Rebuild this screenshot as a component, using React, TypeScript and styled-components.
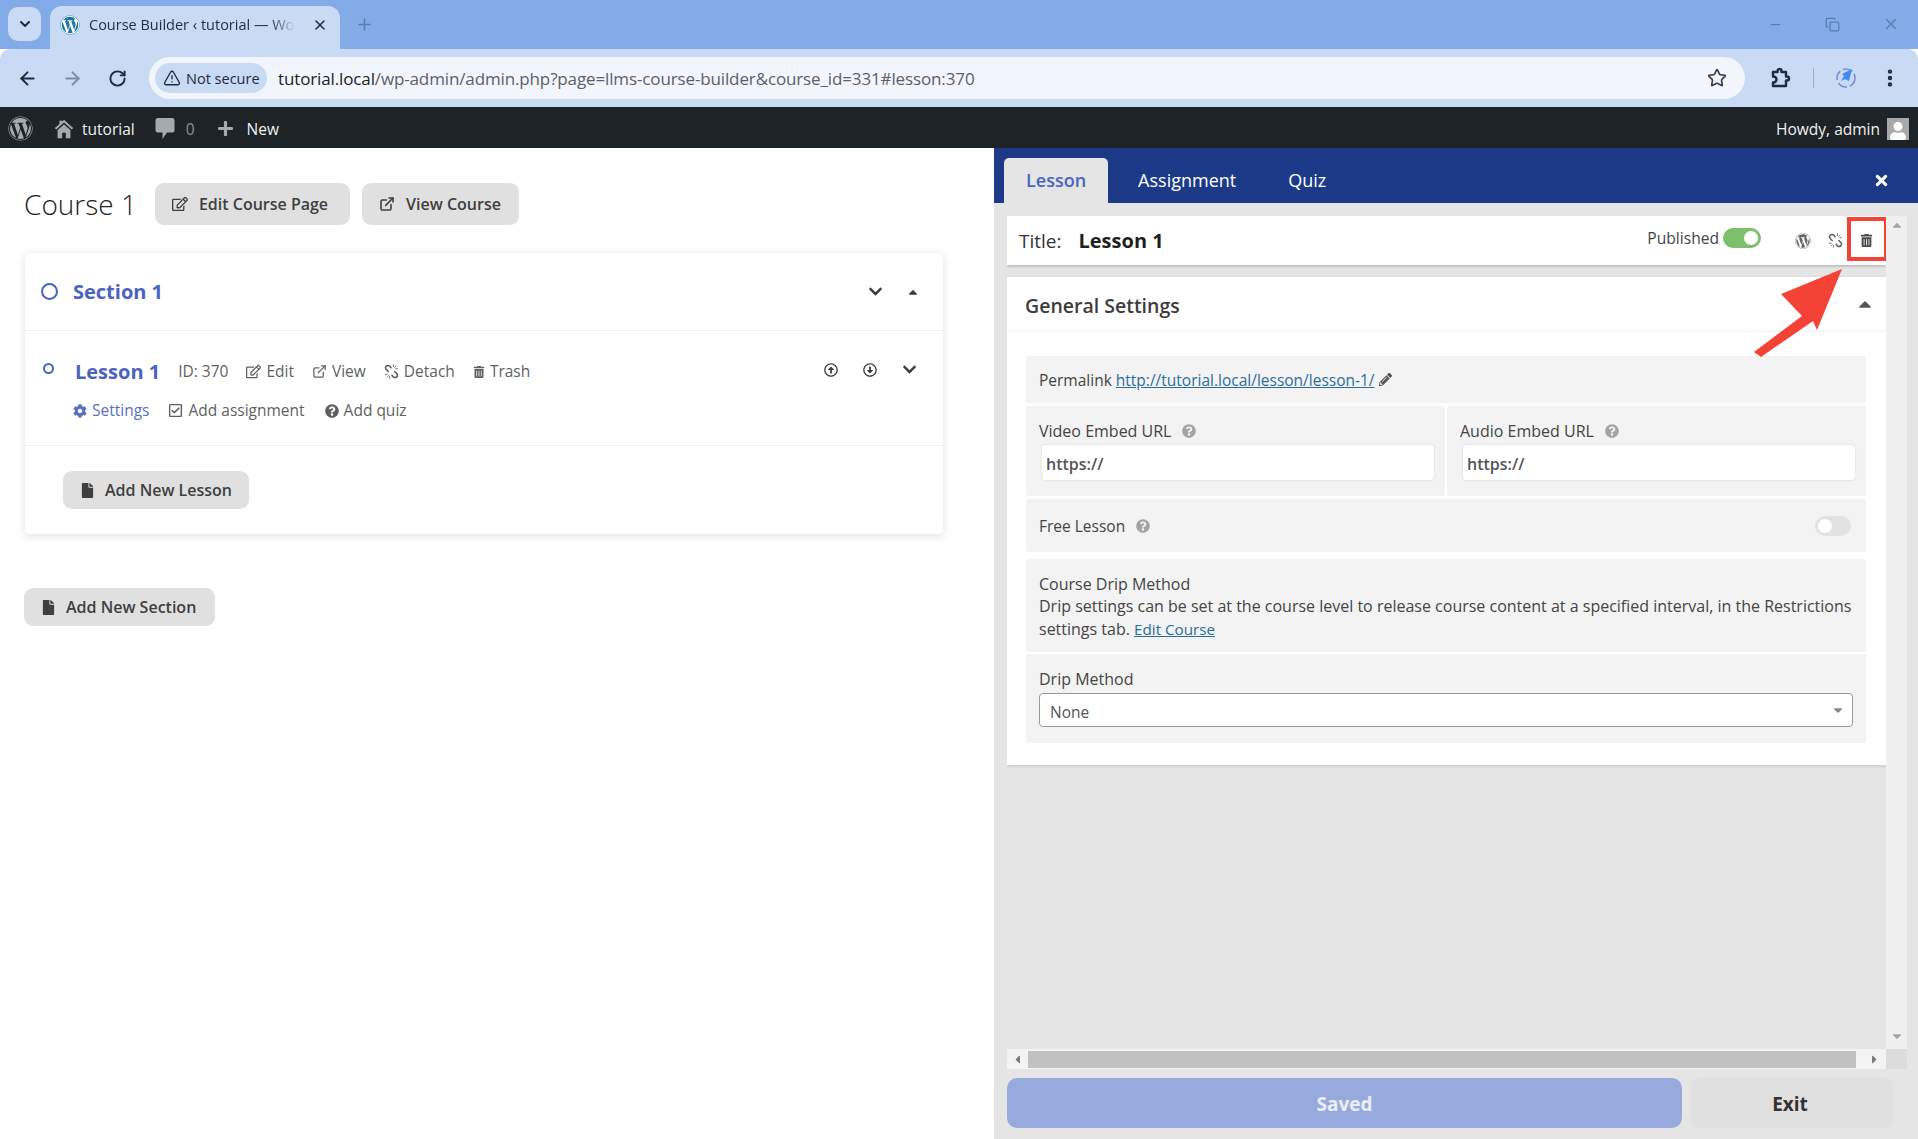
import React from 'react';
import styled, { createGlobalStyle } from 'styled-components';
import {
  FaWordpress, FaPlus, FaRegEdit, FaCog, FaRegCheckSquare, FaQuestionCircle, FaFile, FaChevronDown,
  FaCaretUp, FaTimes, FaPencilAlt, FaRegArrowAltCircleUp, FaRegArrowAltCircleDown, FaUser, FaTrashAlt,
  FaCaretDown, FaCaretLeft, FaCaretRight,
} from 'react-icons/fa';
import { FiExternalLink } from 'react-icons/fi';
import { ArrowLeft, ArrowRight, RotateCw, TriangleAlert, Star, EllipsisVertical, ChevronDown, X, Plus, Minus, Copy } from 'lucide-react';

const Global = createGlobalStyle`
  html, body { margin: 0; padding: 0; }
  body { font-family: "Open Sans", "Noto Sans", sans-serif; color: #444; background: #fff; }
  * { box-sizing: border-box; }
`;

const Page = styled.div`
  position: relative;
  width: 1918px;
  height: 1139px;
  display: flex;
  flex-direction: column;
  overflow: hidden;
`;

/* browser chrome */
const TabStrip = styled.div`
  height: 49px;
  background: #83abe8;
  display: flex;
  align-items: flex-end;
  padding-left: 8px;
  color: #44546f;
`;

const TabMenu = styled.div`
  width: 33px;
  height: 34px;
  margin-bottom: 8px;
  border-radius: 10px;
  background: #c9daf5;
  color: #1f2a3d;
  display: flex;
  align-items: center;
  justify-content: center;
`;

const BrowserTab = styled.div`
  width: 290px;
  height: 43px;
  margin-left: 9px;
  padding: 0 12px 6px 10px;
  background: #c9daf5;
  border-radius: 12px 12px 0 0;
  display: flex;
  align-items: center;
  color: #27303f;
`;

const Favicon = styled.span`
  width: 20px;
  height: 20px;
  border-radius: 50%;
  background: #fff;
  color: #1f77a8;
  display: flex;
  flex: none;
  font-size: 20px;
`;

const TabTitle = styled.span`
  margin-left: 9px;
  width: 206px;
  height: 20px;
  line-height: 20px;
  font-size: 14.5px;
  white-space: nowrap;
  overflow: hidden;
  mask-image: linear-gradient(90deg, #000 88%, transparent);
`;

const TabClose = styled.span`
  margin-left: auto;
  display: flex;
`;

const NewTab = styled.span`
  margin: 0 0 15px 15px;
  display: flex;
  color: #5d7cae;
`;

const WindowControls = styled.div`
  margin: 0 18px 16px auto;
  display: flex;
  align-items: center;
  gap: 42px;
  color: #5a7cb4;
`;

const Toolbar = styled.div`
  height: 58px;
  background: #c9daf5;
  border-radius: 10px 10px 0 0;
  display: flex;
  align-items: center;
  padding: 0 15px 0 15px;
  color: #1f2a3d;
`;

const NavButton = styled.span<{ $dim?: boolean }>`
  width: 24px;
  margin-right: 21px;
  display: flex;
  justify-content: center;
  color: ${(p) => (p.$dim ? '#7b8ba8' : '#1f2a3d')};
`;

const Omnibox = styled.div`
  width: 1596px;
  height: 42px;
  margin-left: -1px;
  padding: 0 18px 0 6px;
  border-radius: 21px;
  background: #f2f6fc;
  display: flex;
  align-items: center;
`;

const SecurePill = styled.div`
  width: 112px;
  height: 30px;
  border-radius: 15px;
  background: #c9daf5;
  display: flex;
  align-items: center;
  gap: 5px;
  padding-left: 8px;
  font-size: 14.5px;
  font-weight: 500;
  color: #1f2a3d;
`;

const Url = styled.div`
  margin-left: 11px;
  flex: 1;
  font-size: 17px;
  letter-spacing: -0.13px;
  color: #5b5f66;
  b { font-weight: 400; color: #1b1e23; }
`;

const ToolIcons = styled.div`
  margin-left: 23px;
  display: flex;
  align-items: center;
`;

const Divider = styled.span`
  width: 1px;
  height: 20px;
  margin: 0 21px 0 21px;
  background: #9fb0cc;
`;

const ToolSvg = styled.svg<{ $w: number }>`
  width: ${(p) => p.$w}px;
  height: 24px;
  flex: none;
`;

const MenuDots = styled.span`
  margin-left: 22px;
  display: flex;
`;

/* admin bar */
const AdminBar = styled.div`
  height: 41px;
  background: #1d2327;
  color: #f0f0f1;
  display: flex;
  align-items: center;
  font-size: 15.5px;
  padding: 2px 9px 0 8px;
`;

const AdminItem = styled.span<{ $gap: number; $iconGap?: number }>`
  margin-right: ${(p) => p.$gap}px;
  display: flex;
  align-items: center;
  gap: ${(p) => p.$iconGap ?? 9}px;
  svg { color: #a7aaad; }
`;

const Muted = styled.span`
  color: #8c8f94;
`;

const Howdy = styled.span`
  margin-left: auto;
  display: flex;
  align-items: center;
  gap: 7px;
`;

const Avatar = styled.span`
  width: 22px;
  height: 22px;
  background: #a9a9a9;
  color: #fff;
  display: flex;
  align-items: flex-end;
  justify-content: center;
  overflow: hidden;
  svg { color: #fff; }
`;

/* page */
const Main = styled.div`
  flex: 1;
  display: grid;
  grid-template-columns: 994px 924px;
  min-height: 0;
`;

const Builder = styled.div`
  padding: 35px 51px 0 24px;
`;

const CourseHead = styled.div`
  display: flex;
  align-items: center;
  height: 42px;
`;

const CourseTitle = styled.h1`
  margin: 0 18px 0 0;
  font-size: 28px;
  font-weight: 300;
  color: #222;
`;

const GrayButton = styled.button<{ $h?: number; $pr?: number; $gap?: number }>`
  height: ${(p) => p.$h ?? 42}px;
  border: none;
  border-radius: 9px;
  background: #e0e0e0;
  color: #3f3f3f;
  font: 600 16px "Open Sans", sans-serif;
  display: inline-flex;
  align-items: center;
  gap: ${(p) => p.$gap ?? 11}px;
  padding: 0 ${(p) => p.$pr ?? 17}px 0 17px;
  margin-right: 12px;
  svg { flex: none; }
`;

const Card = styled.div`
  margin-top: 28px;
  margin-left: 1px;
  width: 918px;
  background: #fff;
  border-radius: 4px;
  box-shadow: 0 2px 10px rgba(0, 0, 0, 0.12);
`;

const SectionRow = styled.div`
  height: 78px;
  padding: 0 23px 0 16px;
  display: flex;
  align-items: center;
  border-bottom: 1px solid #eee;
`;

const Ring = styled.span<{ $size: number; $w: number; $top?: number }>`
  width: ${(p) => p.$size}px;
  height: ${(p) => p.$size}px;
  margin-top: ${(p) => p.$top ?? 0}px;
  border: ${(p) => p.$w}px solid #4a63c0;
  border-radius: 50%;
  flex: none;
`;

const SectionName = styled.span`
  margin-left: 15px;
  font-size: 20px;
  font-weight: 700;
  color: #4a63c0;
`;

const RightIcons = styled.span<{ $gap: number; $top?: number }>`
  margin: ${(p) => p.$top ?? 0}px 0 0 auto;
  display: flex;
  align-items: center;
  gap: ${(p) => p.$gap}px;
  color: #3a3a3a;
`;

const LessonRow = styled.div`
  height: 115px;
  padding: 27px 26px 0 18px;
  border-bottom: 1px solid #eee;
`;

const LessonTop = styled.div`
  display: flex;
  align-items: flex-start;
  height: 39px;
`;

const LessonName = styled.span`
  margin: 0 18px 0 21px;
  font-size: 20px;
  line-height: 27px;
  font-weight: 700;
  color: #4a63c0;
`;

const Action = styled.span<{ $gap?: number; $accent?: boolean }>`
  display: inline-flex;
  align-items: center;
  gap: 5px;
  font-size: 15.5px;
  line-height: 27px;
  margin-right: ${(p) => p.$gap ?? 18}px;
  color: ${(p) => (p.$accent ? '#5a70c2' : '#5f5f5f')};
  white-space: nowrap;
  svg { flex: none; }
`;

const LessonBottom = styled.div`
  padding-left: 30px;
  display: flex;
  align-items: center;
`;

const AddLessonWrap = styled.div`
  padding: 25px 38px 25px;
`;

const AddSection = styled.div`
  margin-top: 54px;
`;

/* settings panel */
const Panel = styled.div`
  background: #e5e5e5;
  display: flex;
  flex-direction: column;
  min-height: 0;
`;

const PanelHead = styled.div`
  height: 55px;
  background: #1c3a87;
  display: flex;
  align-items: flex-end;
  padding: 0 28px 0 10px;
`;

const PanelTab = styled.div<{ $active?: boolean }>`
  height: 45px;
  padding: 0 ${(p) => (p.$active ? 22 : 26)}px 2px;
  margin-right: ${(p) => (p.$active ? 4 : 0)}px;
  display: flex;
  align-items: center;
  font-size: 18px;
  font-weight: ${(p) => (p.$active ? 600 : 400)};
  border-radius: 5px 5px 0 0;
  background: ${(p) => (p.$active ? '#e5e5e5' : 'transparent')};
  color: ${(p) => (p.$active ? '#4a63c0' : '#fff')};
`;

const CloseBtn = styled.span`
  margin: 0 0 14px auto;
  display: flex;
  color: #fff;
`;

const ScrollArea = styled.div`
  margin: 13px 11px 0 13px;
  height: 853px;
  display: grid;
  grid-template-columns: 879px 21px;
  grid-template-rows: 833px 20px;
`;

const ScrollContent = styled.div`
  overflow: hidden;
`;

const TitleBar = styled.div`
  position: relative;
  height: 49px;
  background: #fff;
  box-shadow: 0 1px 3px rgba(0, 0, 0, 0.25);
  display: flex;
  align-items: center;
  padding: 0 12px;
`;

const TitleLabel = styled.span`
  font-size: 19px;
  color: #333;
`;

const TitleValue = styled.span`
  margin-left: 17px;
  font-size: 20px;
  font-weight: 700;
  color: #1f1f1f;
`;

const PublishedGroup = styled.span`
  margin-left: auto;
  display: flex;
  align-items: center;
  gap: 4px;
  font-size: 15.6px;
  color: #444;
  margin-bottom: 6px;
`;

const Switch = styled.span<{ $on?: boolean }>`
  width: ${(p) => (p.$on ? 38 : 36)}px;
  height: 20px;
  border-radius: 10px;
  background: ${(p) => (p.$on ? '#7cc06e' : '#e2e2e2')};
  display: flex;
  align-items: center;
  justify-content: ${(p) => (p.$on ? 'flex-end' : 'flex-start')};
  padding: 0 3px;
  &::after {
    content: '';
    width: 14px;
    height: 14px;
    border-radius: 50%;
    background: #fff;
  }
`;

const PushedSwitch = styled(Switch)`
  margin: 0 2px 0 auto;
`;

const TitleIcons = styled.span`
  margin-left: 34px;
  margin-right: 1px;
  display: flex;
  align-items: center;
  gap: 17px;
  color: #666;
`;

const TrashIcon = styled.span`
  display: flex;
  color: #4a4a4a;
`;

const RedBox = styled.span`
  position: absolute;
  right: -2px;
  top: 1px;
  width: 41px;
  height: 44px;
  border: 4px solid #f44336;
`;

const SettingsCard = styled.div`
  margin-top: 12px;
  background: #fff;
  height: 488px;
  box-shadow: 0 1px 3px rgba(0, 0, 0, 0.15);
`;

const SettingsHead = styled.div`
  height: 55px;
  padding: 3px 11px 0 18px;
  display: flex;
  align-items: center;
  justify-content: space-between;
  border-bottom: 1px solid #f0f0f0;
  font-size: 19.5px;
  font-weight: 600;
  color: #3c3c3c;
  svg { color: #555; margin-top: -4px; }
`;

const SettingsBody = styled.div`
  margin: 24px 20px 0 19px;
  display: flex;
  flex-direction: column;
  gap: 3px;
  font-size: 15.5px;
  color: #444;
`;

const Field = styled.div<{ $h: number; $top?: number }>`
  height: ${(p) => p.$h}px;
  margin-top: ${(p) => p.$top ?? 0}px;
  background: #f3f3f3;
  padding: 0 13px;
  border-radius: 2px;
`;

const PermalinkField = styled(Field)`
  display: flex;
  align-items: center;
  gap: 4px;
`;

const SwitchField = styled(Field)`
  display: flex;
  align-items: center;
`;

const HelpIcon = styled.span`
  margin-left: 11px;
  display: flex;
  color: #a3a3a3;
`;

const TwoCols = styled.div`
  display: grid;
  grid-template-columns: 419px 419px;
  gap: 2px;
`;

const Label = styled.div`
  display: flex;
  align-items: center;
  height: 20px;
  font-size: 16px;
`;

const UrlField = styled(Field)`
  padding-top: 15px;
`;

const UrlInput = styled.div`
  margin: 4px 0 0 3px;
  width: 392px;
  height: 35px;
  background: #fff;
  border-radius: 3px;
  box-shadow: 0 0 2px rgba(0, 0, 0, 0.18);
  padding: 2px 4px 0;
  display: flex;
  align-items: center;
  font-size: 16px;
  font-weight: 600;
  color: #555;
`;

const A = styled.a`
  color: #2b6d9e;
  text-decoration: underline;
`;

const DripLink = styled(A)`
  font-size: 15.2px;
`;

const DripText = styled.div`
  padding-top: 14px;
  line-height: 23px;
  font-size: 16px;
  white-space: nowrap;
`;

const DripHeading = styled.div`
  font-weight: 500;
  line-height: 22px;
`;

const DripLabel = styled.div`
  padding-top: 14px;
  line-height: 22px;
  font-size: 16px;
`;

const Select = styled.div`
  margin-top: 3px;
  width: 813.5px;
  height: 34px;
  background: #fff;
  border: 1px solid #999;
  border-radius: 4px;
  display: flex;
  align-items: center;
  justify-content: space-between;
  padding: 3px 7px 0 10px;
  color: #555;
  svg { color: #888; margin-top: -4px; }
`;

const VTrack = styled.div`
  background: #f0f0f0;
  display: flex;
  flex-direction: column;
  align-items: center;
  justify-content: space-between;
  color: #a3a3a3;
  padding: 2px 0 6px;
`;

const HTrack = styled.div`
  background: #f3f3f3;
  display: flex;
  align-items: center;
  padding: 0 5px 0 4px;
  color: #777;
`;

const HThumb = styled.div`
  flex: 1;
  height: 17px;
  margin: 0 12px 0 4px;
  background: #c1c1c1;
`;

const Corner = styled.div`
  background: #dcdcdc;
`;

const Footer = styled.div`
  margin: 9px 25px 0 13px;
  display: grid;
  grid-template-columns: 675px 202px;
  justify-content: space-between;
`;

const SaveBtn = styled.button`
  height: 50px;
  border: none;
  border-radius: 10px;
  padding: 2px 0 0;
  background: #98a9de;
  color: #eaf0fb;
  font: 700 19px "Open Sans", sans-serif;
`;

const ExitBtn = styled.button`
  height: 50px;
  border: none;
  border-radius: 8px;
  padding: 2px 4px 0 0;
  background: #e0e0e0;
  color: #333;
  font: 700 19px "Open Sans", sans-serif;
`;

const Arrow = styled.svg`
  position: absolute;
  left: 1750px;
  top: 265px;
  width: 96px;
  height: 96px;
`;

const Help = () => (
  <HelpIcon>
    <FaQuestionCircle size={14} />
  </HelpIcon>
);

// the old Font Awesome chain-broken glyph
const BrokenChain = ({ size }: { size: number }) => (
  <svg width={size} height={size} viewBox="0 0 16 16" fill="none" stroke="currentColor" strokeWidth="1.7" strokeLinecap="round">
    <path d="M7.5 4 L6 2.3 a2.5 2.5 0 0 0-3.6 0 a2.5 2.5 0 0 0 0 3.6 L4.5 8" />
    <path d="M8.5 12 L10 13.7 a2.5 2.5 0 0 0 3.6 0 a2.5 2.5 0 0 0 0-3.6 L11.5 8" />
    <path d="M10 .8v2M12.6 2.2l-1.2 1.3M14.5 5h-2M1.5 11h2M3.4 13.8l1.2-1.3M6 15.2v-2" strokeWidth="0.9" />
  </svg>
);

const HomeGlyph = () => (
  <svg width="22" height="22" viewBox="0 0 24 24" fill="currentColor">
    <path d="M12 2 L22 11 L20.5 12.5 L12 5 L3.5 12.5 L2 11 L7 6.5 V3 H10 V3.8 Z" />
    <path d="M5 13 L12 7 L19 13 V22 H14 V16 H10 V22 H5 Z" />
  </svg>
);

const CommentGlyph = () => (
  <svg width="20" height="23" viewBox="0 0 20 23" fill="currentColor">
    <path d="M3 1 H17 a2.5 2.5 0 0 1 2.5 2.5 V13 a2.5 2.5 0 0 1-2.5 2.5 H12 L7.5 22 V15.5 H3 A2.5 2.5 0 0 1 .5 13 V3.5 A2.5 2.5 0 0 1 3 1 Z" />
  </svg>
);

export default function App() {
  return (
    <Page>
      <Global />
      <TabStrip>
        <TabMenu><ChevronDown size={16} strokeWidth={3} /></TabMenu>
        <BrowserTab>
          <Favicon><FaWordpress /></Favicon>
          <TabTitle>Course Builder ‹ tutorial — WordPress</TabTitle>
          <TabClose><X size={16} strokeWidth={2.4} /></TabClose>
        </BrowserTab>
        <NewTab><Plus size={19} /></NewTab>
        <WindowControls>
          <Minus size={15} />
          <Copy size={15} />
          <X size={18} />
        </WindowControls>
      </TabStrip>

      <Toolbar>
        <NavButton><ArrowLeft size={21} strokeWidth={2.2} /></NavButton>
        <NavButton $dim><ArrowRight size={21} strokeWidth={2.2} /></NavButton>
        <NavButton><RotateCw size={19} strokeWidth={2.4} /></NavButton>
        <Omnibox>
          <SecurePill><TriangleAlert size={18} strokeWidth={1.8} />Not secure</SecurePill>
          <Url><b>tutorial.local</b>/wp-admin/admin.php?page=llms-course-builder&amp;course_id=331#lesson:370</Url>
          <Star size={20} strokeWidth={2} color="#3b3f46" />
        </Omnibox>
        <ToolIcons>
          <ToolSvg $w={24} viewBox="0 0 24 24" fill="none" stroke="currentColor" strokeWidth="2.4" strokeLinejoin="round">
            <path d="M5 6h4.5V5a2 2 0 0 1 4 0v1H18v4.5h1a2 2 0 0 1 0 4h-1V20H5v-3.5h.5a3 3 0 0 0 0-6H5Z" />
          </ToolSvg>
          <Divider />
          <ToolSvg $w={22} viewBox="0 0 22 24">
            <circle cx="11" cy="12" r="9" fill="none" stroke="#7a8fd0" strokeWidth="1.6" strokeDasharray="10 3" />
            <path d="M17 3 L14 15 L10 13 L6 15 L9 10 L7 8 Z" fill="#3f8df0" />
          </ToolSvg>
          <MenuDots><EllipsisVertical size={22} strokeWidth={2.8} /></MenuDots>
        </ToolIcons>
      </Toolbar>

      <AdminBar>
        <AdminItem $gap={20}><FaWordpress size={25} /></AdminItem>
        <AdminItem $gap={20} $iconGap={7}><HomeGlyph />tutorial</AdminItem>
        <AdminItem $gap={22} $iconGap={11}><CommentGlyph /><Muted>0</Muted></AdminItem>
        <AdminItem $gap={0} $iconGap={13}><FaPlus size={17} />New</AdminItem>
        <Howdy>
          Howdy, admin
          <Avatar><FaUser size={18} /></Avatar>
        </Howdy>
      </AdminBar>

      <Main>
        <Builder>
          <CourseHead>
            <CourseTitle>Course 1</CourseTitle>
            <GrayButton $pr={22}><FaRegEdit size={16} />Edit Course Page</GrayButton>
            <GrayButton $pr={18}><FiExternalLink size={16} strokeWidth={2.4} />View Course</GrayButton>
          </CourseHead>

          <Card>
            <SectionRow>
              <Ring $size={17} $w={2} />
              <SectionName>Section 1</SectionName>
              <RightIcons $gap={23}>
                <FaChevronDown size={15} />
                <FaCaretUp size={14} />
              </RightIcons>
            </SectionRow>

            <LessonRow>
              <LessonTop>
                <Ring $size={11} $w={2} $top={5} />
                <LessonName>Lesson 1</LessonName>
                <Action>ID: 370</Action>
                <Action><FaRegEdit size={15} />Edit</Action>
                <Action><FiExternalLink size={15} strokeWidth={2} />View</Action>
                <Action><BrokenChain size={15} />Detach</Action>
                <Action><FaTrashAlt size={12} />Trash</Action>
                <RightIcons $gap={25} $top={4}>
                  <FaRegArrowAltCircleUp size={14} />
                  <FaRegArrowAltCircleDown size={14} />
                  <FaChevronDown size={15} />
                </RightIcons>
              </LessonTop>
              <LessonBottom>
                <Action $accent $gap={19}><FaCog size={14} />Settings</Action>
                <Action $gap={20}><FaRegCheckSquare size={15} />Add assignment</Action>
                <Action><FaQuestionCircle size={14} />Add quiz</Action>
              </LessonBottom>
            </LessonRow>

            <AddLessonWrap>
              <GrayButton $h={38} $pr={17} $gap={10}><FaFile size={15} />Add New Lesson</GrayButton>
            </AddLessonWrap>
          </Card>

          <AddSection>
            <GrayButton $h={38} $pr={19} $gap={10}><FaFile size={15} />Add New Section</GrayButton>
          </AddSection>
        </Builder>

        <Panel>
          <PanelHead>
            <PanelTab $active>Lesson</PanelTab>
            <PanelTab>Assignment</PanelTab>
            <PanelTab>Quiz</PanelTab>
            <CloseBtn><FaTimes size={17} /></CloseBtn>
          </PanelHead>

          <ScrollArea>
            <ScrollContent>
              <TitleBar>
                <TitleLabel>Title:</TitleLabel>
                <TitleValue>Lesson 1</TitleValue>
                <PublishedGroup>Published<Switch $on /></PublishedGroup>
                <TitleIcons>
                  <FaWordpress size={16} />
                  <BrokenChain size={15} />
                  <TrashIcon><FaTrashAlt size={13} /></TrashIcon>
                </TitleIcons>
                <RedBox />
              </TitleBar>

              <SettingsCard>
                <SettingsHead>
                  General Settings
                  <FaCaretUp size={20} />
                </SettingsHead>
                <SettingsBody>
                  <PermalinkField $h={47}>
                    Permalink <A href="#">http://tutorial.local/lesson/lesson-1/</A>
                    <FaPencilAlt size={13} color="#555" />
                  </PermalinkField>
                  <TwoCols>
                    <UrlField $h={90}>
                      <Label>Video Embed URL<Help /></Label>
                      <UrlInput>https://</UrlInput>
                    </UrlField>
                    <UrlField $h={90}>
                      <Label>Audio Embed URL<Help /></Label>
                      <UrlInput>https://</UrlInput>
                    </UrlField>
                  </TwoCols>
                  <SwitchField $h={53}>
                    Free Lesson<Help />
                    <PushedSwitch />
                  </SwitchField>
                  <Field $h={93} $top={4}>
                    <DripText>
                      <DripHeading>Course Drip Method</DripHeading>
                      <div>Drip settings can be set at the course level to release course content at a specified interval, in the Restrictions</div>
                      <div>settings tab. <DripLink href="#">Edit Course</DripLink></div>
                    </DripText>
                  </Field>
                  <Field $h={89} $top={-1}>
                    <DripLabel>Drip Method</DripLabel>
                    <Select>None<FaCaretDown size={14} /></Select>
                  </Field>
                </SettingsBody>
              </SettingsCard>
            </ScrollContent>
            <VTrack>
              <FaCaretUp size={14} />
              <FaCaretDown size={14} />
            </VTrack>
            <HTrack>
              <FaCaretLeft size={13} />
              <HThumb />
              <FaCaretRight size={13} />
            </HTrack>
            <Corner />
          </ScrollArea>

          <Footer>
            <SaveBtn>Saved</SaveBtn>
            <ExitBtn>Exit</ExitBtn>
          </Footer>
        </Panel>
      </Main>

      <Arrow viewBox="0 0 96 96">
        <path d="M92 4 L31 29 L52 51 L4 87 L11 92 L63 56 L67 65 Z" fill="#f44336" />
      </Arrow>
    </Page>
  );
}
